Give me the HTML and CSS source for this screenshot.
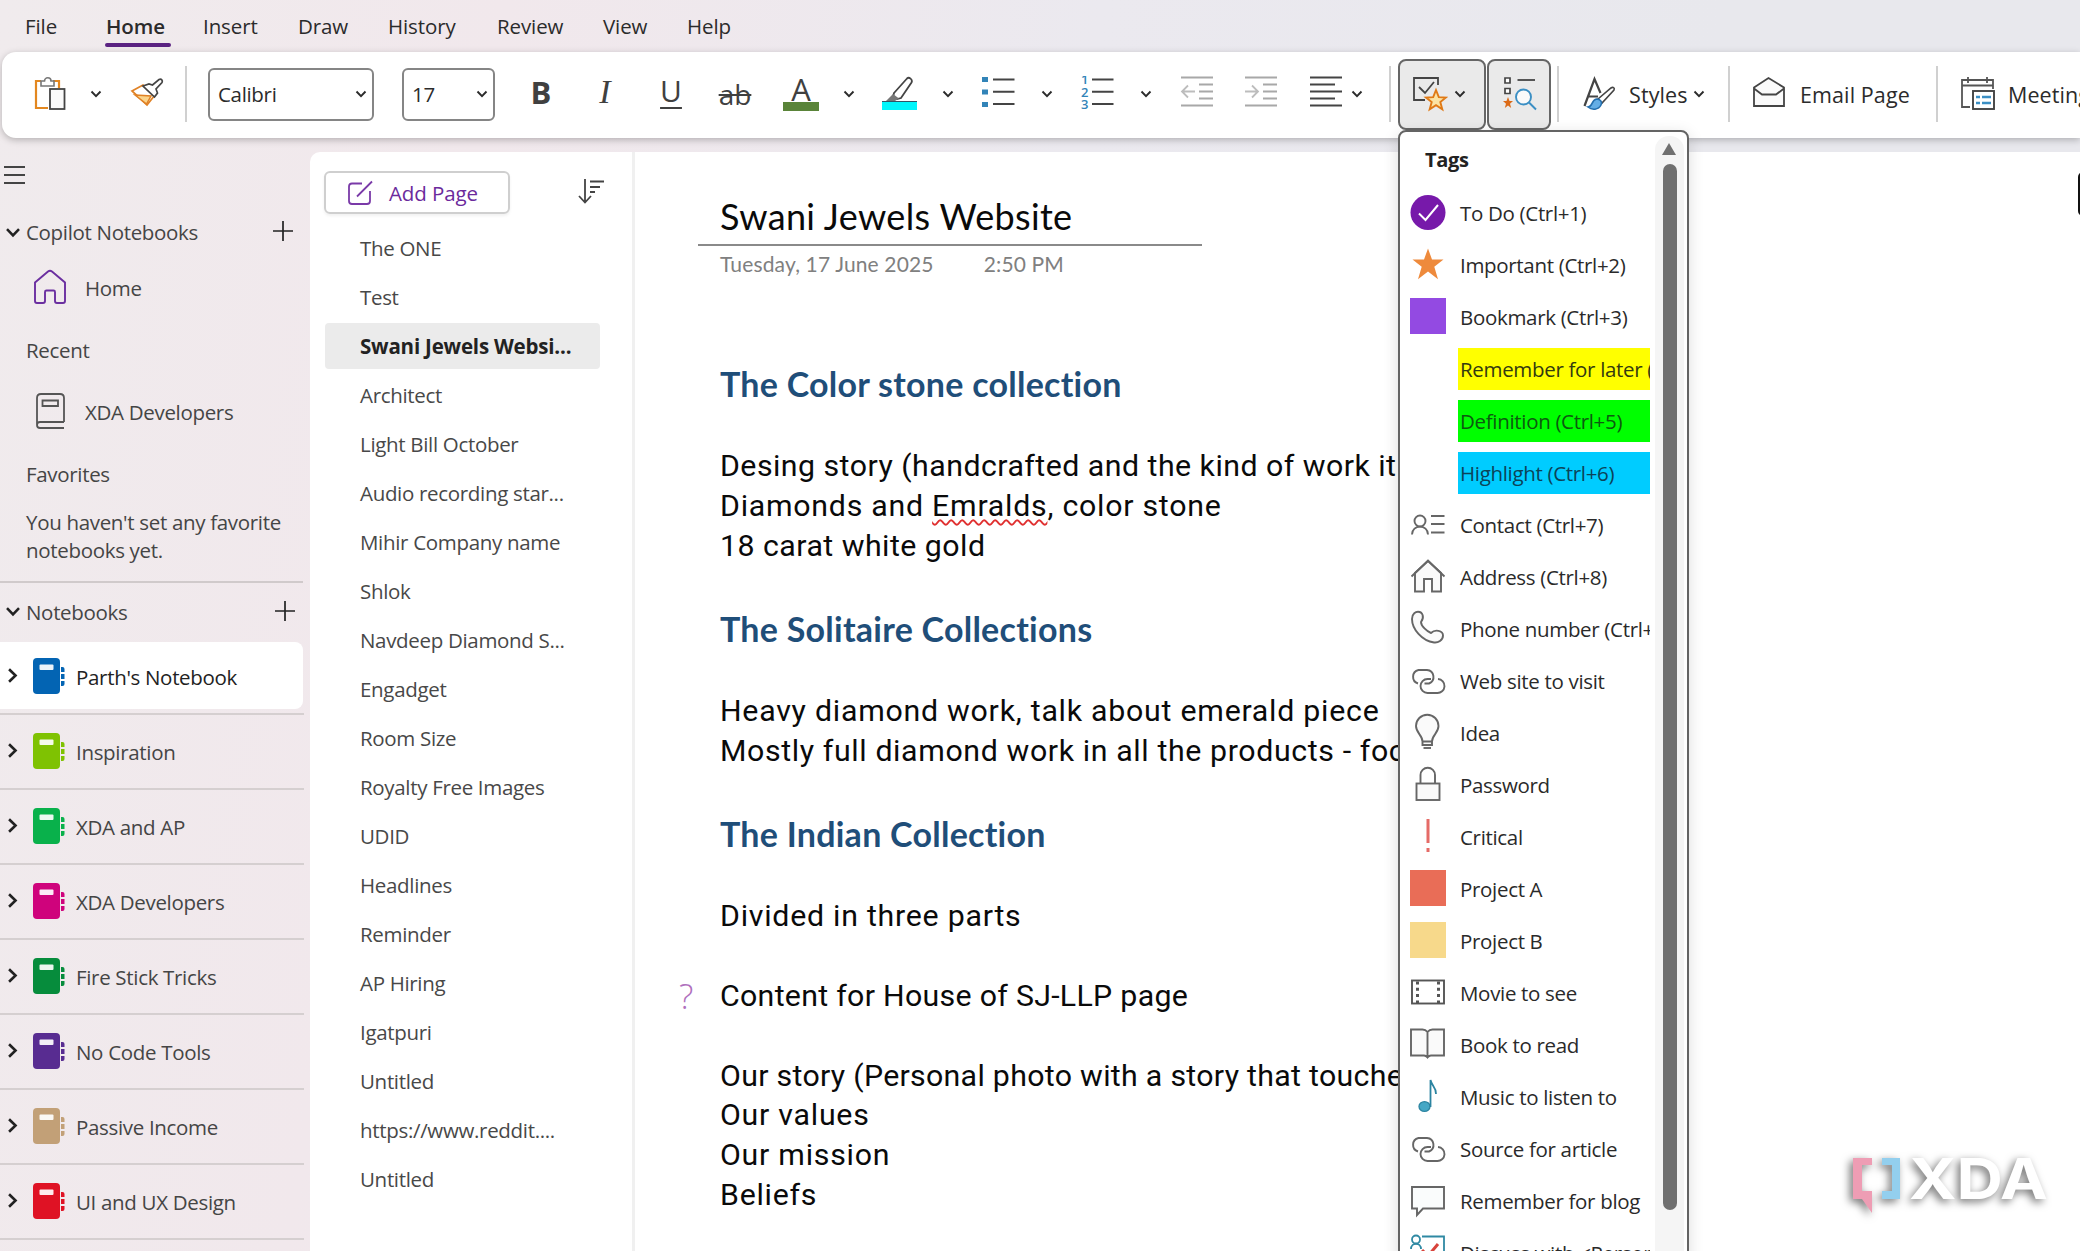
FILE: index.html
```html
<!DOCTYPE html>
<html lang="en">
<head>
  <meta charset="UTF-8" />
  <meta name="viewport" content="width=device-width, initial-scale=1.0" />
  <title>Swani Jewels Website - OneNote</title>
  <link rel="stylesheet" href="styles.css">
</head>
<body>
  <!-- shared icons -->
  <svg class="defs" width="0" height="0">
    <symbol id="chev" viewBox="0 0 12 8"><path d="M1.5 1.5 6 6.2l4.500-4.700" fill="none" stroke="currentColor" stroke-width="1.900"/></symbol>
    <symbol id="plus" viewBox="0 0 22 22"><path d="M11 1v20M1 11h20" fill="none" stroke="currentColor" stroke-width="1.700"/></symbol>
    <symbol id="notebook" viewBox="0 0 32 36">
      <rect x="0" y="0" width="27" height="36" rx="4" fill="currentColor"/>
      <rect x="6.500" y="6.500" width="14" height="5.500" rx="1" fill="#fff" opacity=".92"/>
      <path d="M28 9h1.500a2 2 0 0 1 2 2v3H28zM28 16h3.500v5H28zM28 23h3.500v3a2 2 0 0 1-2 2H28z" fill="currentColor"/>
    </symbol>
    <symbol id="link" viewBox="0 0 36 36">
      <g fill="none" stroke="#666" stroke-width="1.900">
        <path d="M8 20.500A7 7 0 0 1 8.500 7h8.500a7 7 0 0 1 2 13.500h-4.500"/>
        <path d="M21 16h-3.500a7 7 0 0 0 0 14H27a7 7 0 0 0 1-14"/>
      </g>
    </symbol>
  </svg>

  <nav class="menu">
    <a class="m-file">File</a>
    <a class="m-home active">Home</a>
    <a class="m-insert">Insert</a>
    <a class="m-draw">Draw</a>
    <a class="m-history">History</a>
    <a class="m-review">Review</a>
    <a class="m-view">View</a>
    <a class="m-help">Help</a>
  </nav>

  <div class="ribbon">
    <svg class="tool paste" viewBox="0 0 36 36">
      <path d="M8 5H3v27h12M20 5h6v7" fill="none" stroke="#e3871f" stroke-width="2.200"/>
      <path d="M8 10V5h3.500a3.200 3.200 0 0 1 6.500 0H21v5z" fill="#fff" stroke="#777" stroke-width="1.600"/>
      <rect x="17" y="13" width="14.500" height="20" fill="#fafafa" stroke="#444" stroke-width="1.800"/>
    </svg>
    <svg class="arrow paste-arrow"><use href="#chev"/></svg>
    <svg class="tool" viewBox="0 0 36 36">
      <path d="M3 15 14 9l12 10-8 10z" fill="#fff" stroke="#e08226" stroke-width="1.800"/>
      <path d="M6 19l16 1-4.500 8z" fill="#fbd48a" stroke="#e08226" stroke-width="1.500"/>
      <path d="M14 10l6-2 3.500 1L30 3.500c2.500-1 4 1 3 3L27 13l1.500 4-3 4z" fill="#fff" stroke="#444" stroke-width="1.700"/>
    </svg>
    <span class="sep sep-a"></span>
    <div class="select font-name"><span>Calibri</span><svg class="caret"><use href="#chev"/></svg></div>
    <div class="select font-size"><span>17</span><svg class="caret"><use href="#chev"/></svg></div>
    <span class="tool letter bold">B</span>
    <span class="tool letter italic">I</span>
    <span class="tool letter under">U</span>
    <span class="tool letter strike">ab</span>
    <span class="tool letter color">A</span>
    <svg class="arrow"><use href="#chev"/></svg>
    <svg class="tool" viewBox="0 0 36 36">
      <path d="M12 17 25 2.500c2-2 6 1 4.500 4L19 22l-4 1-4-2z" fill="#fff" stroke="#444" stroke-width="1.800"/>
      <path d="M11 18l6 4.500L13 25H4z" fill="#777"/>
      <rect x="0" y="25" width="35" height="9" fill="#00f6fb"/>
      <path d="M0 25.500h35" stroke="#356" stroke-width="1"/>
    </svg>
    <svg class="arrow"><use href="#chev"/></svg>
    <svg class="tool" viewBox="0 0 36 36">
      <path d="M1 1h6v5H1zM1 13.500h6v5H1zM1 26h6v5H1z" fill="#3284b8"/>
      <path d="M12 3.500h21.500M12 15.800h21.500M12 28h21.500" stroke="#444" stroke-width="2"/>
    </svg>
    <svg class="arrow"><use href="#chev"/></svg>
    <svg class="tool" viewBox="0 0 36 36">
      <g class="nums"><text x="1" y="8">1</text><text x="1" y="20.500">2</text><text x="1" y="33">3</text></g>
      <path d="M12 3.500h21.500M12 15.800h21.500M12 28h21.500" stroke="#444" stroke-width="2"/>
    </svg>
    <svg class="arrow"><use href="#chev"/></svg>
    <svg class="tool" viewBox="0 0 36 36" fill="none" stroke="#a8a8a8" stroke-width="1.800">
      <path d="M2 1.500h32M20 8.500h14M20 15.500h14M20 22.500h14M2 29.500h32"/>
      <path d="M16 15.500H3M9 9.500l-6 6 6 6" stroke="#bdbdbd"/>
    </svg>
    <svg class="tool" viewBox="0 0 36 36" fill="none" stroke="#a8a8a8" stroke-width="1.800">
      <path d="M2 1.500h32M20 8.500h14M20 15.500h14M20 22.500h14M2 29.500h32"/>
      <path d="M2 15.500h13M9 9.500l6 6-6 6" stroke="#bdbdbd"/>
    </svg>
    <svg class="tool align" viewBox="0 0 36 36" fill="none" stroke="#444" stroke-width="2">
      <path d="M2 1.500h32M2 8.500h25M2 15.500h32M2 22.500h25M2 29.500h32"/>
    </svg>
    <svg class="arrow near"><use href="#chev"/></svg>
    <span class="sep sep-b"></span>
    <div class="toggle tags">
      <svg class="icon" viewBox="0 0 36 36">
        <path d="M26 9V2H2v22h11" fill="none" stroke="#444" stroke-width="1.800"/>
        <path d="M7 11l6 6 9-11" fill="none" stroke="#444" stroke-width="1.800"/>
        <path d="M24 14l2.800 7.200 7.200.3-5.700 4.600 2 7.200-6.300-4.200-6.300 4.200 2-7.200-5.700-4.600 7.200-.3z" fill="#fbe3a4" stroke="#e07a16" stroke-width="1.900"/>
      </svg>
      <svg class="caret"><use href="#chev"/></svg>
    </div>
    <div class="toggle find">
      <svg class="icon" viewBox="0 0 36 36">
        <path d="M3 2h5v5H3zM3 12.500h5v5H3z" fill="#fff" stroke="#444" stroke-width="1.700"/>
        <path d="M15.500 4H33" stroke="#444" stroke-width="1.800"/>
        <path d="M6 21l1.500 4H11l-3 2.700 1.200 4.300L6 29.500 2.800 32 4 27.700 1 25h3.500z" fill="#dc6b18"/>
        <ellipse cx="21.500" cy="21" rx="7.500" ry="7.500" fill="#fafafa" stroke="#3b8fc4" stroke-width="1.900"/>
        <path d="M27 26.500l7 7" stroke="#3b8fc4" stroke-width="1.900"/>
      </svg>
    </div>
    <span class="sep sep-c"></span>
    <svg class="tool styles-icon" viewBox="0 0 36 36">
      <path d="M3.500 30 13.500 3l6 14M7 20.500h10" fill="none" stroke="#444" stroke-width="2.200"/>
      <path d="M17 23 30 12c2-1.500 4 0 3 2L21 27z" fill="#fff" stroke="#444" stroke-width="1.600"/>
      <path d="M7 31c5 0 3-7 8.500-8 4 0 6 3 4.500 6-2.500 5-9 5.500-13 2z" fill="#64aee6" stroke="#246fae" stroke-width="1.600"/>
    </svg>
    <span class="label">Styles</span>
    <svg class="arrow near"><use href="#chev"/></svg>
    <span class="sep sep-d"></span>
    <svg class="tool email-icon" viewBox="0 0 36 36">
      <path d="M3 11.500 17.500 2 33 11.500V30H3z" fill="#fafafa" stroke="#444" stroke-width="1.800"/>
      <path d="M3 12.500 11 18.500h14l8-6" fill="none" stroke="#444" stroke-width="1.800"/>
    </svg>
    <span class="label email">Email Page</span>
    <span class="sep sep-e"></span>
    <svg class="tool meet-icon" viewBox="0 0 36 36">
      <path d="M10 31H2V4h31v9M2 9.500h31M8 1v6M27 1v6" fill="none" stroke="#555" stroke-width="1.800"/>
      <rect x="13" y="15" width="21" height="18" fill="#fff" stroke="#444" stroke-width="1.900"/>
      <path d="M16 21h4M16 27h4M22 21h9M22 27h9" stroke="#3b8fc4" stroke-width="2.400"/>
    </svg>
    <span class="label">Meeting Details</span>
  </div>

  <div class="workspace">
    <aside class="sidebar">
      <div class="burger"><i></i><i></i><i></i></div>
      <div class="head copilot"><svg class="fold"><use href="#chev"/></svg><span>Copilot Notebooks</span><svg class="plus"><use href="#plus"/></svg></div>
      <div class="entry">
        <svg viewBox="0 0 34 36"><path d="M2 13.500 15 2.500q2-1.600 4 0L32 13.500V32q0 2-2 2h-6q-2 0-2-2v-9q0-1.500-1.500-1.500h-7Q12 21.500 12 23v9q0 2-2 2H4q-2 0-2-2z" fill="none" stroke="#6b2fa0" stroke-width="1.900"/></svg>
        <span>Home</span>
      </div>
      <div class="sub">Recent</div>
      <div class="entry">
        <svg viewBox="0 0 34 36"><path d="M31 29H7q-3 0-3 3t3 3h24M4 32V5q0-4 4-4h19q4 0 4 4v24M9.500 7.500h15.500v5.500H9.500z" fill="none" stroke="#555" stroke-width="1.800"/></svg>
        <span>XDA Developers</span>
      </div>
      <div class="sub">Favorites</div>
      <p class="note">You haven't set any favorite<br>notebooks yet.</p>
      <div class="head"><svg class="fold"><use href="#chev"/></svg><span>Notebooks</span><svg class="plus"><use href="#plus"/></svg></div>
      <ul class="books">
        <li class="open"><div><svg class="fold"><use href="#chev"/></svg><svg class="book c-blue"><use href="#notebook"/></svg><span>Parth's Notebook</span></div></li>
        <li><div><svg class="fold"><use href="#chev"/></svg><svg class="book c-lime"><use href="#notebook"/></svg><span>Inspiration</span></div></li>
        <li><div><svg class="fold"><use href="#chev"/></svg><svg class="book c-green"><use href="#notebook"/></svg><span>XDA and AP</span></div></li>
        <li><div><svg class="fold"><use href="#chev"/></svg><svg class="book c-pink"><use href="#notebook"/></svg><span>XDA Developers</span></div></li>
        <li><div><svg class="fold"><use href="#chev"/></svg><svg class="book c-forest"><use href="#notebook"/></svg><span>Fire Stick Tricks</span></div></li>
        <li><div><svg class="fold"><use href="#chev"/></svg><svg class="book c-purple"><use href="#notebook"/></svg><span>No Code Tools</span></div></li>
        <li><div><svg class="fold"><use href="#chev"/></svg><svg class="book c-tan"><use href="#notebook"/></svg><span>Passive Income</span></div></li>
        <li><div><svg class="fold"><use href="#chev"/></svg><svg class="book c-red"><use href="#notebook"/></svg><span>UI and UX Design</span></div></li>
      </ul>
    </aside>

    <section class="pages">
      <div class="pages-top">
        <div class="add">
          <svg viewBox="0 0 26 26"><path d="M15 3.500H5q-3 0-3 3V21q0 3 3 3h15q3 0 3-3V11M10 16.500 25 1.500" fill="none" stroke="#7a3aa8" stroke-width="1.800"/></svg>
          <span>Add Page</span>
        </div>
        <svg class="sort" viewBox="0 0 26 26"><path d="M7 1v23M1 18l6 6.500 6-6.500M12 3.500h14M12 9h10M12 14h5" fill="none" stroke="#444" stroke-width="1.800"/></svg>
      </div>
      <ul class="page-list">
        <li>The ONE</li>
        <li>Test</li>
        <li class="current">Swani Jewels Websi...</li>
        <li>Architect</li>
        <li>Light Bill October</li>
        <li>Audio recording star...</li>
        <li>Mihir Company name</li>
        <li>Shlok</li>
        <li>Navdeep Diamond S...</li>
        <li>Engadget</li>
        <li>Room Size</li>
        <li>Royalty Free Images</li>
        <li>UDID</li>
        <li>Headlines</li>
        <li>Reminder</li>
        <li>AP Hiring</li>
        <li>Igatpuri</li>
        <li>Untitled</li>
        <li>https://www.reddit....</li>
        <li>Untitled</li>
      </ul>
    </section>

    <main class="canvas">
      <h1>Swani Jewels Website</h1>
      <div class="stamp"><span>Tuesday, 17 June 2025</span><span>2:50 PM</span></div>
      <h2>The Color stone collection</h2>
      <p>Desing story (handcrafted and the kind of work it</p>
      <p class="wide">Diamonds and <span class="typo">Emralds</span>, color stone</p>
      <p>18 carat white gold</p>
      <h2 class="next">The Solitaire Collections</h2>
      <p class="wide">Heavy diamond work, talk about emerald piece</p>
      <p class="mid">Mostly full diamond work in all the products - focus</p>
      <h2 class="next">The Indian Collection</h2>
      <p class="wide">Divided in three parts</p>
      <p class="tagged">Content for House of SJ-LLP page</p>
      <p class="gap">Our story (Personal photo with a story that touches</p>
      <p class="wide">Our values</p>
      <p class="wide">Our mission</p>
      <p class="wide">Beliefs</p>
    </main>
  </div>

  <div class="tag-menu">
    <div class="tag-list">
      <h3>Tags</h3>
      <div class="tag"><svg viewBox="0 0 36 36"><circle cx="18" cy="17.500" r="17.500" fill="#7719aa"/><path d="M9 18.500l6.500 6.500L28 10" fill="none" stroke="#fff" stroke-width="2"/></svg><span>To Do (Ctrl+1)</span></div>
      <div class="tag"><svg viewBox="0 0 36 36"><path d="M18 1.500l4 11h11.500l-9.200 7.200 3.700 12.500-10-7.700-10 7.700 3.700-12.500L2.500 12.500H14z" fill="#ee8a3c"/></svg><span>Important (Ctrl+2)</span></div>
      <div class="tag"><svg viewBox="0 0 36 36"><rect y="-1" width="36" height="36" fill="#934ae2"/></svg><span>Bookmark (Ctrl+3)</span></div>
      <div class="tag"><i></i><span class="hl yellow">Remember for later (Ctrl+4)</span></div>
      <div class="tag"><i></i><span class="hl lime">Definition (Ctrl+5)</span></div>
      <div class="tag"><i></i><span class="hl sky">Highlight (Ctrl+6)</span></div>
      <div class="tag"><svg viewBox="0 0 36 36" fill="none" stroke="#666" stroke-width="1.900"><ellipse cx="10" cy="14" rx="5.500" ry="5.500"/><path d="M2 27.500c0-10.500 16-10.500 16 0M21 9h13.500M21 17h13.500M21 25.500h13.500"/></svg><span>Contact (Ctrl+7)</span></div>
      <div class="tag"><svg viewBox="0 0 36 36" fill="none" stroke="#666" stroke-width="1.900"><path d="M5 14v18.500h9V20h8v12.500h9V14L18 2z" fill="#fafafa"/><path d="M1.500 17.500 18 1.500l16.500 16"/></svg><span>Address (Ctrl+8)</span></div>
      <div class="tag"><svg viewBox="0 0 36 36"><path d="M2 8C2 2 6 .8 8 .8c5 0 6.500 6 3 10.200 0 4 6 9.500 10 11 4-4 12-2.500 12 2.500 0 5-5 7.500-9 7C12 30 2 18 2 8z" fill="#fafafa" stroke="#666" stroke-width="1.900"/></svg><span>Phone number (Ctrl+9)</span></div>
      <div class="tag"><svg><use href="#link"/></svg><span>Web site to visit</span></div>
      <div class="tag"><svg viewBox="0 0 36 36" fill="none" stroke="#666" stroke-width="1.900"><path d="M12.500 26.500C12.500 20 6 18 6 11a11 11 0 0 1 22.500 0c0 7-6.500 9-6.500 15.500zM12.500 26.500v3.500H22v-3.500" fill="#fafafa"/><path d="M13.500 33h7.500"/></svg><span>Idea</span></div>
      <div class="tag"><svg viewBox="0 0 36 36" fill="none" stroke="#666" stroke-width="1.900"><path d="M10.500 16V8a7.200 7.200 0 0 1 14.500 0v8"/><rect x="6.500" y="16.500" width="23" height="16.500" fill="#fafafa"/></svg><span>Password</span></div>
      <div class="tag"><svg viewBox="0 0 36 36"><path d="M16.500 0h3v24h-3zM16.500 29h3v4h-3z" fill="#e56b67"/></svg><span>Critical</span></div>
      <div class="tag"><svg viewBox="0 0 36 36"><rect y="-1" width="36" height="36" fill="#e96d57"/></svg><span>Project A</span></div>
      <div class="tag"><svg viewBox="0 0 36 36"><rect y="-1" width="36" height="36" fill="#f7d98b"/></svg><span>Project B</span></div>
      <div class="tag"><svg viewBox="0 0 36 36"><rect x="2" y="5.500" width="32" height="23" fill="#fff" stroke="#555" stroke-width="1.900"/><path d="M7.500 6.500v22M28.500 6.500v22" stroke="#555" stroke-width="3" stroke-dasharray="3 3.300"/></svg><span>Movie to see</span></div>
      <div class="tag"><svg viewBox="0 0 36 36"><path d="M17.500 5q-2-2.500-5-2.500H1v26h13q2 0 3.500 2 1.500-2 3.500-2h13v-26H22.500q-3 0-5 2.500zv25" fill="#fafafa" stroke="#666" stroke-width="1.900"/></svg><span>Book to read</span></div>
      <div class="tag"><svg viewBox="0 0 36 36"><ellipse cx="14.500" cy="27.500" rx="5.500" ry="4.800" fill="#45a7c5" stroke="#2b84a1" stroke-width="1.300"/><path d="M20.500 28V1c1 6 6 7 5.500 14" fill="none" stroke="#2b84a1" stroke-width="1.800"/></svg><span>Music to listen to</span></div>
      <div class="tag"><svg><use href="#link"/></svg><span>Source for article</span></div>
      <div class="tag"><svg viewBox="0 0 36 36"><path d="M2 4h32v21.500H13L7 32v-6.500H2z" fill="#fafcfc" stroke="#666" stroke-width="1.900"/></svg><span>Remember for blog</span></div>
      <div class="tag"><svg viewBox="0 0 36 36" fill="none" stroke="#2f89a3" stroke-width="1.800"><path d="M12 1.500h22v31H2V16"/><ellipse cx="6" cy="4.500" rx="4" ry="4"/><path d="M1 14c0-7 10-7 10 0"/><path d="M12 15l6 6L28 9" stroke="#d8433b" stroke-width="3"/></svg><span>Discuss with &lt;Person A&gt;</span></div>
    </div>
    <div class="scroll"><i class="up"></i><i class="thumb"></i></div>
  </div>

  <i class="edge"></i>

  <svg class="watermark" viewBox="0 0 220 80">
    <path d="M28 8H13v41h9l10 14V41H22V15h10V8z" fill="#ee9db4"/>
    <path d="M42 8h18v41H42v-8h10V15H42z" fill="#93cfee"/>
    <text x="69" y="49" textLength="139" lengthAdjust="spacingAndGlyphs">XDA</text>
  </svg>
</body>
</html>
```

FILE: styles.css
```css
* { box-sizing: border-box; }
body {
  margin: 0;
  height: 1251px;
  overflow: hidden;
  position: relative;
  background: linear-gradient(100deg, #f0ebed 0%, #f1e8ec 22%, #ebe9ef 48%, #e8e8ed 75%, #e8e8ed 100%);
  font-family: "Open Sans", sans-serif;
  font-size: 20.5px;
  letter-spacing: -0.32px;
  color: #444;
  white-space: nowrap;
}
h1, h2, h3, p, ul {
  margin: 0;
  padding: 0;
  font-weight: 400;
}
ul { list-style: none; }
svg { display: block; flex: none; }
.defs { position: absolute; }

/* menu bar */
.menu {
  height: 52px;
  padding-left: 25px;
  display: flex;
  line-height: 53px;
  letter-spacing: -0.1px;
  color: #2b2b2b;
}
.menu a { display: block; height: 52px; }
.m-file { width: 81px; }
.m-home { width: 62px; margin-right: 35px; }
.m-insert { width: 95px; }
.m-draw { width: 90px; }
.m-history { width: 109px; }
.m-review { width: 106px; }
.m-view { width: 84px; }
.menu .active {
  font-weight: 600;
  position: relative;
}
.menu .active::after {
  content: "";
  position: absolute;
  left: -1px;
  top: 43px;
  width: 66px;
  height: 4px;
  border-radius: 2px;
  background: #5b2382;
}

/* ribbon */
.ribbon {
  height: 86px;
  margin-left: 2px;
  padding-bottom: 2px;
  display: flex;
  align-items: center;
  background: #fff;
  border-radius: 14px 0 0 14px;
  box-shadow: 0 2px 7px rgba(0,0,0,0.25);
  color: #2b2b2b;
  position: relative;
}
.tool {
  width: 36px;
  height: 36px;
  margin-left: 28px;
  flex: none;
}
.arrow {
  width: 12px;
  height: 8px;
  margin-left: 24px;
}
.arrow + .tool { margin-left: 27px; }
.paste { margin-left: 31px; }
.paste-arrow { margin-left: 21px; }
.tool.align { margin-left: 29px; }
.near { margin-left: 7px; }
.caret { width: 12px; height: 8px; }
.sep {
  width: 2px;
  height: 56px;
  background: #d0d0d0;
  flex: none;
}
.sep-a { margin: 0 21px 0 20px; }
.sep-b { margin: 0 7px 0 26px; }
.sep-c { margin: 0 0 0 6px; }
.sep-d { margin: 0 0 0 23px; }
.sep-e { margin: 0; }
.select {
  height: 53px;
  display: flex;
  align-items: center;
  justify-content: space-between;
  padding: 0 5px 0 8px;
  border: 2px solid #858585;
  border-radius: 6px;
  flex: none;
}
.font-name { width: 166px; }
.font-size { width: 93px; margin-left: 28px; }
.letter {
  text-align: center;
  font-size: 31px;
  line-height: 32px;
  letter-spacing: 0;
  color: #404040;
}
.bold { font-weight: 700; }
.italic { font-family: "Liberation Serif", serif; font-style: italic; font-size: 34px; }
.under {
  margin-left: 30px;
  font-size: 30px;
  line-height: 29px;
  text-decoration: underline;
  text-decoration-thickness: 2px;
  text-underline-offset: 5px;
}
.strike { font-size: 28px; line-height: 36px; text-decoration: line-through; text-decoration-thickness: 2px; }
.color {
  margin-left: 30px;
  height: 34px;
  line-height: 24px;
  border-bottom: 9px solid #5a8439;
}
.nums {
  font-size: 13px;
  font-weight: 600;
  fill: #3284b8;
}
.toggle {
  height: 71px;
  display: flex;
  align-items: center;
  border: 2px solid #666;
  border-radius: 8px;
  background: #eaeaea;
  flex: none;
}
.tags { width: 88px; padding-left: 12px; gap: 6px; }
.find { width: 64px; margin-left: 1px; padding-left: 13px; }
.icon { width: 36px; height: 36px; }
.sep + .styles-icon { margin-left: 22px; }
.sep + .email-icon { margin-left: 21px; }
.sep + .meet-icon { margin-left: 22px; }
.label {
  width: 57px;
  margin-left: 12px;
  font-size: 21.5px;
  letter-spacing: 0.1px;
  flex: none;
}
.email { width: 122px; margin: 0 14px 0 13px; }

/* workspace columns */
.workspace {
  display: flex;
  height: 1113px;
}
.sidebar { width: 310px; flex: none; color: #454545; }
.burger {
  height: 73px;
  padding: 28px 0 0 4px;
}
.burger i {
  display: block;
  width: 21px;
  height: 2px;
  margin-bottom: 6px;
  background: #444;
}
.head {
  height: 57px;
  display: flex;
  align-items: center;
}
.head.copilot { height: 42px; }
.head .fold { margin: 0 5px 0 5px; width: 16px; height: 11px; color: #222; }
.plus { width: 22px; height: 22px; margin: 0 14px 2px auto; color: #222; }
.copilot .plus { margin-right: 16px; }
.entry {
  height: 70px;
  padding-left: 33px;
  display: flex;
  align-items: center;
  gap: 18px;
}
.entry svg { width: 34px; height: 36px; margin-bottom: 2px; }
.sub { height: 54px; padding-left: 26px; line-height: 54px; }
.note {
  width: 303px;
  padding: 7px 0 17px 26px;
  line-height: 28px;
  border-bottom: 2px solid #d0cacb;
}
.books li {
  width: 304px;
  height: 75px;
  border-bottom: 2px solid #d5cfd0;
  padding: 2px 1px 4px 0;
}
.books div {
  height: 67px;
  display: flex;
  align-items: center;
  border-radius: 0 8px 8px 0;
}
.books .open div { background: #fff; color: #222; }
.books .fold {
  width: 17px;
  height: 11px;
  margin: 0 12px 1px 4px;
  color: #222;
  transform: rotate(-90deg);
}
.books span { padding-top: 2px; }
.book { width: 32px; height: 36px; margin-right: 11px; }
.c-blue { color: #0364b3; }
.c-lime { color: #7fc202; }
.c-green { color: #09b14b; }
.c-pink { color: #cf037c; }
.c-forest { color: #068c3c; }
.c-purple { color: #582c91; }
.c-tan { color: #c2a077; }
.c-red { color: #df1224; }

/* page list */
.pages {
  width: 325px;
  margin-top: 14px;
  flex: none;
  background: #fff;
  border-radius: 10px 0 0 0;
  border-right: 3px solid #f0f0f0;
}
.pages-top {
  display: flex;
  align-items: flex-start;
  padding: 19px 0 0 14px;
}
.add {
  width: 186px;
  height: 43px;
  display: flex;
  align-items: center;
  padding-left: 21px;
  gap: 16px;
  border: 2px solid #cfcfcf;
  border-radius: 6px;
  box-shadow: 0 2px 3px rgba(0,0,0,0.06);
  letter-spacing: -0.1px;
  color: #6b2a9c;
}
.add svg { width: 26px; height: 26px; }
.sort { width: 26px; height: 26px; margin: 7px 0 0 68px; }
.page-list { padding: 11px 0 0 15px; }
.page-list li {
  width: 275px;
  height: 46px;
  margin-bottom: 3px;
  padding-left: 35px;
  line-height: 46px;
  color: #484848;
}
.page-list .current {
  background: #ebebeb;
  border-radius: 4px;
  font-weight: 700;
  letter-spacing: -0.2px;
  color: #222;
}

/* note canvas */
.canvas {
  flex: 1;
  margin-top: 14px;
  padding-left: 63px;
  background: #fff;
  font-family: Roboto, sans-serif;
  font-size: 30.3px;
  line-height: 40px;
  letter-spacing: 0.47px;
  color: #0a0a0a;
  font-variant-ligatures: none;
}
.canvas h1 {
  width: 504px;
  height: 94px;
  padding: 44px 0 0 22px;
  font-family: Lato, sans-serif;
  font-size: 36px;
  letter-spacing: 0.35px;
  border-bottom: 2px solid #8a8a8a;
}
.stamp {
  display: flex;
  gap: 50px;
  padding-left: 22px;
  height: 36px;
  line-height: 35px;
  font-family: Lato, sans-serif;
  font-size: 21px;
  letter-spacing: 0.15px;
  color: #808080;
}
.canvas h2 {
  margin: 82px 0 42px;
  padding-left: 22px;
  font-family: Lato, sans-serif;
  font-size: 34px;
  font-weight: 700;
  letter-spacing: 0.25px;
  color: #1f4e79;
}
.canvas h2.next { margin: 43px 0 42px; }
.canvas p { padding-left: 22px; }
.canvas .wide { letter-spacing: 0.75px; }
.canvas .mid { letter-spacing: 0.62px; }
.canvas .gap { margin-top: 40px; letter-spacing: 0.3px; }
.canvas .gap + p { margin-top: -1px; }
.typo {
  text-decoration: underline wavy #e03030 1.5px;
  text-underline-offset: 3px;
  text-decoration-skip-ink: none;
}
.canvas .tagged {
  margin-top: 40px;
  letter-spacing: 0.3px;
  position: relative;
}
.tagged::before {
  content: "?";
  position: absolute;
  left: -19px;
  font-family: "Open Sans", sans-serif;
  font-weight: 300;
  font-size: 34px;
  color: #b070bd;
}

/* tags drop-down */
.tag-menu {
  position: absolute;
  left: 1398px;
  top: 130px;
  width: 291px;
  height: 1140px;
  display: flex;
  background: #fff;
  border: 2px solid #646464;
  border-radius: 8px;
  box-shadow: 0 4px 16px rgba(0,0,0,0.14);
  color: #2a2a2a;
}
.tag-list { width: 250px; padding-left: 10px; overflow: hidden; }
.tag-list h3 {
  height: 55px;
  padding-left: 15px;
  line-height: 56px;
  font-size: 20px;
  font-weight: 700;
  color: #222;
}
.tag {
  height: 52px;
  display: flex;
  align-items: center;
}
.tag svg, .tag i { width: 36px; height: 36px; flex: none; overflow: visible; }
.tag span {
  width: 192px;
  margin-left: 12px;
  padding-left: 2px;
  line-height: 42px;
  overflow: hidden;
  flex: none;
}
.yellow { background: #ffff00; }
.lime { background: #00ff00; }
.sky { background: #00ccff; }
.hl { color: #333a10; }
.hl.lime { color: #0d5a10; }
.hl.sky { color: #0c4358; }
.scroll {
  width: 29px;
  margin: 4px 0 0 5px;
  padding-top: 7px;
  background: #f5f5f5;
  border-radius: 14px 14px 0 0;
}
.up {
  display: block;
  width: 0;
  margin-left: 7px;
  border: 7.5px solid transparent;
  border-top: 0;
  border-bottom: 12px solid #707070;
}
.thumb {
  display: block;
  width: 14px;
  height: 1046px;
  margin: 9px 0 0 8px;
  border-radius: 7px;
  background: #707070;
}

/* handle cut off at the window edge */
.edge {
  position: absolute;
  right: -8px;
  top: 172px;
  width: 10px;
  height: 44px;
  border-radius: 6px;
  background: #111;
}
.watermark {
  position: absolute;
  left: 1840px;
  top: 1150px;
  width: 220px;
  height: 80px;
  overflow: visible;
  filter: drop-shadow(-3px 3px 4px rgba(0,0,0,0.55));
}
.watermark text {
  font-family: Inter, sans-serif;
  font-size: 56px;
  font-weight: 700;
  letter-spacing: 0;
  fill: #fff;
}
```
